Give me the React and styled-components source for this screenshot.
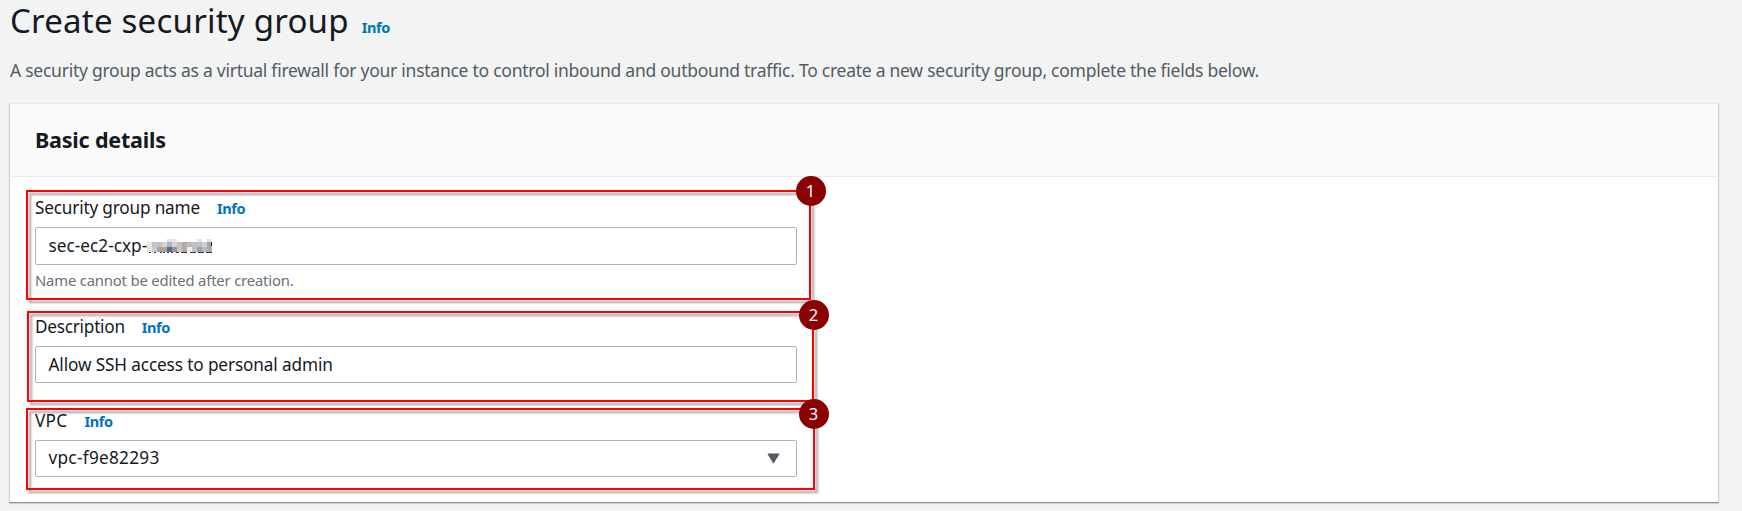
import React from 'react';
import styled, { createGlobalStyle } from 'styled-components';

const GlobalStyle = createGlobalStyle`
  *, *::before, *::after { box-sizing: border-box; }
  body {
    margin: 0;
    background: #f2f3f3;
    color: #16191f;
    font-family: 'Noto Sans', 'Open Sans', sans-serif;
  }
`;

const Page = styled.main`
  height: 511px;
  padding: 0 23px 0 9px;
  overflow: hidden;
`;

const TitleRow = styled.header`
  display: flex;
  align-items: baseline;
  height: 41px;
  padding-left: 1px;
`;

const Title = styled.h1`
  margin: 0 13px 0 0;
  font-size: 33px;
  line-height: 41px;
  font-weight: 400;
  letter-spacing: 0.22px;
  white-space: nowrap;
`;

const InfoLink = styled.a`
  color: #0073bb;
  font-size: 14.5px;
  line-height: 20px;
  font-weight: 700;
  letter-spacing: -0.4px;
  cursor: pointer;
`;

const Lead = styled.p`
  margin: 17px 0 21px 1px;
  color: #545b64;
  font-size: 17.5px;
  line-height: 24px;
  letter-spacing: -0.256px;
  white-space: nowrap;
`;

const Card = styled.section`
  position: relative;
  height: 400px;
  background: #fff;
  border: 1px solid #c9cfd0;
  border-top-color: #eaeded;
  border-bottom-color: #879596;
  box-shadow: 0 1px 1px rgba(0, 28, 36, 0.15);
`;

const CardHeader = styled.div`
  display: flex;
  align-items: center;
  height: 73px;
  padding: 0 0 1px 25px;
  background: #fafafa;
  border-bottom: 1px solid #eaeded;
`;

const CardTitle = styled.h2`
  margin: 0;
  font-size: 21.5px;
  line-height: 28px;
  font-weight: 700;
  letter-spacing: -0.2px;
`;

const Form = styled.form`
  display: flex;
  flex-direction: column;
  width: 787px;
  padding: 19px 0 0 25px;
`;

const Field = styled.div`
  display: flex;
  flex-direction: column;
  margin-bottom: ${(p) => p.$gap}px;
`;

const LabelRow = styled.div`
  display: flex;
  align-items: baseline;
  height: 24px;
  margin-bottom: 7px;
`;

const Label = styled.label`
  margin-right: 17px;
  font-size: 17.2px;
  line-height: 24px;
  letter-spacing: ${(p) => p.$track ?? -0.18}px;
  white-space: nowrap;
`;

const Control = styled.div`
  display: flex;
  align-items: center;
  height: ${(p) => p.$height || 37}px;
  padding: 0 16px ${(p) => p.$lift || 0}px 12.5px;
  background: #fff;
  border: 1px solid #aab7b8;
  border-radius: 2px;
  font-size: 17.2px;
  line-height: 24px;
  letter-spacing: ${(p) => p.$track ?? -0.12}px;
  white-space: nowrap;
`;

const Caret = styled.svg`
  margin: 2px 0 0 auto;
`;

const Hint = styled.p`
  margin: 5px 0 0;
  color: #687078;
  font-size: 14.8px;
  line-height: 20px;
  letter-spacing: -0.16px;
`;

const Callout = styled.div`
  position: absolute;
  left: ${(p) => p.$x}px;
  top: ${(p) => p.$y}px;
  width: ${(p) => p.$w}px;
  height: ${(p) => p.$h}px;
  border: 2px solid #fe0000;
  filter: drop-shadow(3px 3px 1px rgba(0, 0, 0, 0.38));
  pointer-events: none;
`;

const Badge = styled.span`
  position: absolute;
  left: ${(p) => p.$x}px;
  top: ${(p) => p.$y}px;
  width: 30px;
  height: 30px;
  border-radius: 50%;
  background: #8b0000;
  color: #fff;
  font-size: 16.5px;
  line-height: 29px;
  text-align: center;
`;

const TOP = ['#f3e6d3', '#bfc3c4', '#bfc3c4', '#d6d6d1', '#a9b7c3', '#e0d0ca', '#c4c0bf', '#b5aaa5', '#b9b9bb', '#b3c2cd', '#bcc0c6', '#d0d0d0', '#9fa8b0'];
const LOW = ['#f0e0cb', '#c6cfde', '#b0a1a0', '#aea29f', '#5f6a7c', '#8d97a3', '#d0c3bb', '#b9a9a2', '#eef0ee', '#c0c2c4', '#a0a0a3', '#b8bcc2', '#a8aeb6'];
const FEET = [149, 154, 160, 163, 167, 171, 176, 181, 184, 190, 193, 198, 201, 206, 209];

const MosaicSvg = styled.svg`
  margin-top: 1px;
`;

const Mosaic = () => (
  <MosaicSvg width="66" height="17" viewBox="147 236 66 17" shapeRendering="crispEdges">
    <rect x="167" y="237" width="5" height="3" fill="#dce0e2" />
    <rect x="172" y="237" width="5" height="3" fill="#efe4df" />
    <rect x="197" y="237" width="5" height="3" fill="#dfe6e9" />
    <rect x="207" y="237" width="4" height="3" fill="#dadfe2" />
    {TOP.map((c, i) => <rect key={i} x={147 + i * 5} y="240" width="5" height="5" fill={c} />)}
    {LOW.map((c, i) => <rect key={i} x={147 + i * 5} y="245" width="5" height="5" fill={c} />)}
    {FEET.map((x) => <rect key={x} x={x} y="250" width={x > 175 ? 3 : 2} height="1" fill="#30343c" />)}
    <path d="M211 240h1v4h-1z" fill="#16191f" />
  </MosaicSvg>
);

const CALLOUTS = [
  { n: 1, x: 16, y: 86, w: 785, h: 110, bx: 785.5, by: 71.6 },
  { n: 2, x: 17, y: 207, w: 787, h: 91, bx: 788.5, by: 195.5 },
  { n: 3, x: 16, y: 304, w: 789, h: 82, bx: 788.5, by: 294.5 },
];

export default function App() {
  return (
    <Page>
      <GlobalStyle />
      <TitleRow>
        <Title>Create security group</Title>
        <InfoLink>Info</InfoLink>
      </TitleRow>
      <Lead>
        A security group acts as a virtual firewall for your instance to control inbound and outbound traffic. To create a new security group, complete the fields below.
      </Lead>
      <Card>
        <CardHeader>
          <CardTitle>Basic details</CardTitle>
        </CardHeader>
        <Form>
          <Field $gap={25}>
            <LabelRow>
              <Label>Security group name</Label>
              <InfoLink>Info</InfoLink>
            </LabelRow>
            <Control $height={38} $track={0.02}>
              <span>sec-ec2-cxp-</span>
              <Mosaic />
            </Control>
            <Hint>Name cannot be edited after creation.</Hint>
          </Field>
          <Field $gap={26}>
            <LabelRow>
              <Label $track={-0.24}>Description</Label>
              <InfoLink>Info</InfoLink>
            </LabelRow>
            <Control>Allow SSH access to personal admin</Control>
          </Field>
          <Field $gap={0}>
            <LabelRow>
              <Label $track={0.3}>VPC</Label>
              <InfoLink>Info</InfoLink>
            </LabelRow>
            <Control $lift={2} $track={0.28}>
              vpc-f9e82293
              <Caret width="13" height="11" viewBox="0 0 13 11">
                <path d="M1.2 1h10.6L6.5 9.8z" fill="#545b64" stroke="#545b64" strokeWidth="1.2" strokeLinejoin="round" />
              </Caret>
            </Control>
          </Field>
        </Form>
        {CALLOUTS.map((c) => <Callout key={c.n} $x={c.x} $y={c.y} $w={c.w} $h={c.h} />)}
        {CALLOUTS.map((c) => <Badge key={c.n} $x={c.bx} $y={c.by}>{c.n}</Badge>)}
      </Card>
    </Page>
  );
}
